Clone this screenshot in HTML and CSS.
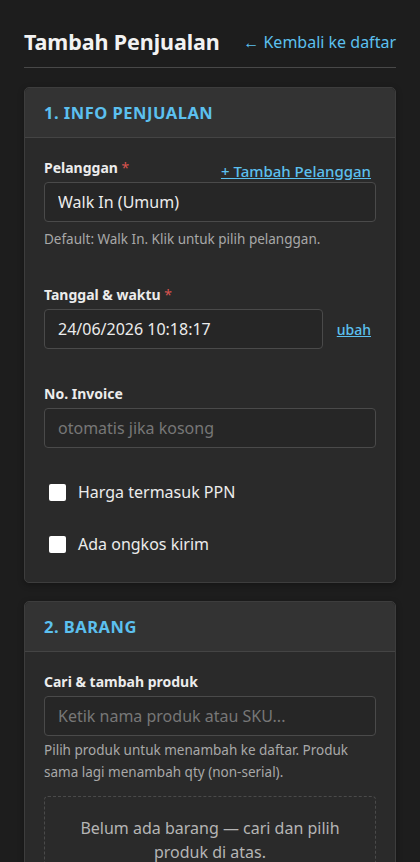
FILE: index.html
```html
<!DOCTYPE html>
<html lang="id">
<head>
    <meta charset="UTF-8">
    <meta name="viewport" content="width=device-width, initial-scale=1.0">
    <title>Tambah Penjualan</title>
    <link rel="stylesheet" href="styles.css">
</head>
<body>
    <div class="page">
        <div class="page-header">
            <h1>Tambah Penjualan</h1>
            <a href="#" class="back-link">← Kembali ke daftar</a>
        </div>

        <form class="sale-form">
            <section class="card">
                <div class="card-header">
                    <h2>1. Info Penjualan</h2>
                </div>
                <div class="card-body">
                    <div class="form-group">
                        <div class="label-row">
                            <label for="customer">Pelanggan <span class="req">*</span></label>
                            <a href="#" class="inline-link">+ Tambah Pelanggan</a>
                        </div>
                        <input type="text" id="customer" class="field" value="Walk In (Umum)" readonly>
                        <p class="help">Default: Walk In. Klik untuk pilih pelanggan.</p>
                    </div>

                    <div class="form-group">
                        <label for="date">Tanggal &amp; waktu <span class="req">*</span></label>
                        <div class="field-row">
                            <input type="text" id="date" class="field" value="24/06/2026 10:18:17" readonly>
                            <a href="#" class="inline-link small">ubah</a>
                        </div>
                    </div>

                    <div class="form-group">
                        <label for="invoice">No. Invoice</label>
                        <input type="text" id="invoice" class="field" placeholder="otomatis jika kosong">
                    </div>

                    <label class="check">
                        <input type="checkbox">
                        <span>Harga termasuk PPN</span>
                    </label>
                    <label class="check">
                        <input type="checkbox">
                        <span>Ada ongkos kirim</span>
                    </label>
                </div>
            </section>

            <section class="card">
                <div class="card-header">
                    <h2>2. Barang</h2>
                </div>
                <div class="card-body">
                    <div class="form-group tight">
                        <label for="search">Cari &amp; tambah produk</label>
                        <input type="text" id="search" class="field" placeholder="Ketik nama produk atau SKU...">
                        <p class="help two-line">Pilih produk untuk menambah ke daftar. Produk sama lagi menambah qty (non-serial).</p>
                    </div>
                    <div class="empty-box">
                        Belum ada barang — cari dan pilih produk di atas.
                    </div>
                </div>
            </section>
        </form>
    </div>
</body>
</html>
```

FILE: styles.css
```css
/* Base Reset */
* {
    margin: 0;
    padding: 0;
    box-sizing: border-box;
}

body {
    font-family: 'Noto Sans', 'Open Sans', sans-serif;
    background: #1d1d1d;
    color: #e8e8e8;
}

/* Page */
.page {
    padding: 0 24px 40px;
}

.page-header {
    display: flex;
    justify-content: space-between;
    align-items: center;
    padding: 27px 0 11px;
    border-bottom: 1px solid #484848;
    margin-bottom: 19px;
}

.page-header h1 {
    font-size: 21.5px;
    font-weight: 700;
    color: #f2f2f2;
    letter-spacing: -0.1px;
}

.back-link {
    color: #5cc0ef;
    text-decoration: none;
    font-size: 16px;
}

/* Cards */
.card {
    background: #2a2a2a;
    border: 1px solid #3d3d3d;
    border-radius: 5px;
    margin-bottom: 18px;
    box-shadow: 0 2px 6px rgba(0,0,0,0.3);
}

.card-header {
    background: #333;
    border-bottom: 1px solid #444;
    border-radius: 5px 5px 0 0;
    padding: 0 19px;
    height: 50px;
    display: flex;
    align-items: center;
}

.card-header h2 {
    font-size: 16.5px;
    font-weight: 700;
    text-transform: uppercase;
    letter-spacing: 0.5px;
    color: #5cc0ef;
}

.card-body {
    padding: 20px 19px 29px;
}

/* Form Elements */
.form-group {
    margin-bottom: 35px;
}

.form-group.tight {
    margin-bottom: 13px;
}

.form-group label,
.label-row {
    display: block;
    font-size: 14px;
    font-weight: 700;
    line-height: 20px;
    color: #ececec;
    margin-bottom: 4px;
}

.label-row {
    display: flex;
    justify-content: space-between;
    align-items: flex-end;
}

.label-row label {
    margin-bottom: 0;
}

.req {
    color: #d9534f;
    font-weight: 400;
}

.inline-link {
    color: #5cc0ef;
    font-size: 15px;
    font-weight: 500;
    text-decoration: underline;
    padding-right: 5px;
}

.inline-link.small {
    font-size: 14px;
}

.label-row .inline-link {
    position: relative;
    top: 3px;
}

.field {
    display: block;
    width: 100%;
    height: 40px;
    padding: 0 13px;
    background: #262626;
    border: 1px solid #4a4a4a;
    border-radius: 4px;
    color: #ececec;
    font-family: inherit;
    font-size: 16px;
}

.field::placeholder {
    color: #777;
}

.field-row {
    display: flex;
    align-items: center;
    gap: 14px;
}

.field-row .field {
    flex: 1;
}

.help {
    margin-top: 7px;
    font-size: 13.5px;
    line-height: 21px;
    color: #a8a8a8;
}

.help.two-line {
    margin-top: 3px;
    line-height: 22px;
    padding-right: 20px;
}

/* Checkboxes */
.check {
    display: flex;
    align-items: center;
    gap: 12px;
    height: 18px;
    padding-left: 5px;
    margin-bottom: 34px;
    font-size: 16px;
    color: #ececec;
}

.check:last-child {
    margin-bottom: 0;
}

.check input {
    appearance: none;
    width: 17px;
    height: 17px;
    background: #fff;
    border-radius: 2px;
}

/* Empty state */
.empty-box {
    border: 1px dashed #4a4a4a;
    border-radius: 4px;
    padding: 19px 30px;
    text-align: center;
    font-size: 16px;
    line-height: 24px;
    color: #b5b5b5;
}
```
